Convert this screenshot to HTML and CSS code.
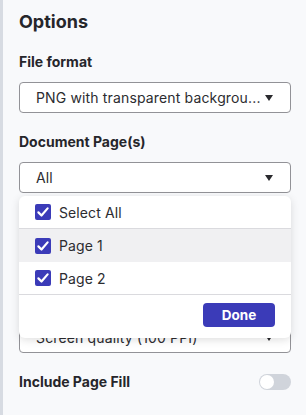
FILE: index.html
```html
<!DOCTYPE html>
<html lang="en">
<head>
    <meta charset="UTF-8">
    <meta name="viewport" content="width=device-width, initial-scale=1.0">
    <title>Export Options</title>
    <link rel="stylesheet" href="styles.css">
</head>
<body>
    <div class="panel">
        <h1 class="title">Options</h1>

        <div class="field">
            <label class="field-label">File format</label>
            <div class="select">
                <span class="select-value">PNG with transparent backgrou...</span>
                <span class="caret"></span>
            </div>
        </div>

        <div class="field">
            <label class="field-label">Document Page(s)</label>
            <div class="select-wrap">
                <div class="select">
                    <span class="select-value">All</span>
                    <span class="caret"></span>
                </div>

                <!-- Menu aberto de páginas -->
                <div class="menu">
                    <label class="menu-item menu-item-all">
                        <span class="checkbox"><svg viewBox="0 0 16 16" width="16" height="16"><path d="M3.4 8.4 6.5 11.5 12.6 4.4" fill="none" stroke="#fff" stroke-width="2.2" stroke-linecap="round" stroke-linejoin="round"/></svg></span>
                        Select All
                    </label>
                    <label class="menu-item is-hover">
                        <span class="checkbox"><svg viewBox="0 0 16 16" width="16" height="16"><path d="M3.4 8.4 6.5 11.5 12.6 4.4" fill="none" stroke="#fff" stroke-width="2.2" stroke-linecap="round" stroke-linejoin="round"/></svg></span>
                        Page 1
                    </label>
                    <label class="menu-item menu-item-last">
                        <span class="checkbox"><svg viewBox="0 0 16 16" width="16" height="16"><path d="M3.4 8.4 6.5 11.5 12.6 4.4" fill="none" stroke="#fff" stroke-width="2.2" stroke-linecap="round" stroke-linejoin="round"/></svg></span>
                        Page 2
                    </label>
                    <div class="menu-footer">
                        <button class="btn-done">Done</button>
                    </div>
                </div>
            </div>
        </div>

        <div class="field">
            <label class="field-label">Size</label>
            <div class="select">
                <span class="select-value">1x</span>
                <span class="caret"></span>
            </div>
        </div>

        <div class="field">
            <label class="field-label">Resolution</label>
            <div class="select">
                <span class="select-value">Screen quality (100 PPI)</span>
                <span class="caret"></span>
            </div>
        </div>

        <div class="toggle-row">
            <span class="field-label">Include Page Fill</span>
            <span class="toggle"><span class="toggle-knob"></span></span>
        </div>
    </div>
</body>
</html>
```

FILE: styles.css
```css
:root {
    --text-color: #26262b;
    --background-color: #f8f9fb;
    --strip-color: #d7dbe2;
    --border-color: #929297;
    --accent-color: #3b3bb8;
    --divider-color: #dadade;
}

* {
    margin: 0;
    padding: 0;
    box-sizing: border-box;
    font-family: 'Inter', 'Liberation Sans', sans-serif;
}

body {
    background-color: var(--background-color);
    color: var(--text-color);
}

.panel {
    min-height: 100vh;
    border-left: 3px solid var(--strip-color);
    padding: 10px 15px 0 16px;
    display: flex;
    flex-direction: column;
    gap: 20px;
}

.title {
    font-size: 18px;
    line-height: 24px;
    font-weight: 700;
    margin-bottom: -1px;
}

.field {
    display: flex;
    flex-direction: column;
    gap: 11px;
}

.field-label {
    display: block;
    font-size: 14px;
    line-height: 18px;
    font-weight: 700;
}

.select-wrap {
    position: relative;
}

.select {
    height: 31px;
    display: flex;
    align-items: center;
    justify-content: space-between;
    background-color: white;
    border: 1px solid var(--border-color);
    border-radius: 4px;
    padding: 0 17px 0 16px;
    font-size: 14px;
    letter-spacing: 0.15px;
    color: #2c2c30;
}

.caret {
    width: 0;
    height: 0;
    border-left: 4px solid transparent;
    border-right: 4px solid transparent;
    border-top: 6px solid #2a2a2e;
    margin-top: 1px;
}

/* Menu de páginas */
.menu {
    position: absolute;
    top: 34px;
    left: 0;
    right: 0;
    z-index: 2;
    background-color: white;
    border-radius: 6px;
    box-shadow: 0 2px 8px rgba(0, 0, 0, 0.13);
    overflow: hidden;
}

.menu-item {
    height: 33px;
    display: flex;
    align-items: center;
    gap: 8px;
    padding-left: 16px;
    font-size: 14px;
    letter-spacing: 0.1px;
    color: #2c2c30;
}

.menu-item-all,
.menu-item-last {
    border-bottom: 1px solid var(--divider-color);
}

.menu-item.is-hover {
    background-color: #f0f0f2;
}

.checkbox {
    width: 16px;
    height: 16px;
    border-radius: 2px;
    background-color: var(--accent-color);
    display: flex;
}

.menu-footer {
    display: flex;
    justify-content: flex-end;
    padding: 8px 16px 11px;
}

.btn-done {
    width: 72px;
    height: 24px;
    border: none;
    border-radius: 4px;
    background-color: var(--accent-color);
    color: white;
    font-size: 13.5px;
    font-weight: 700;
}

.toggle-row {
    display: flex;
    align-items: center;
    justify-content: space-between;
}

.toggle {
    width: 32px;
    height: 16px;
    border-radius: 8px;
    background-color: #d0d4db;
    display: flex;
    align-items: center;
    padding-left: 1px;
}

.toggle-knob {
    width: 14px;
    height: 14px;
    border-radius: 50%;
    background-color: white;
}
```
